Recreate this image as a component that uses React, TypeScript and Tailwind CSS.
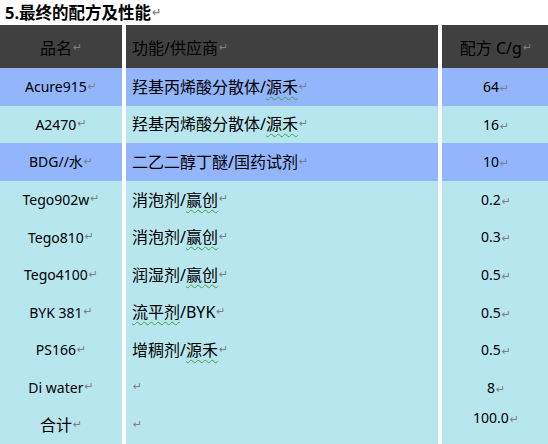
import React from "react";

const Ret = () => (
  <span className="text-[11px] text-[#7f7f7f] ml-[1px]" style={{ fontFamily: '"DejaVu Sans", sans-serif' }}>↵</span>
);

const Wavy = ({ children }: { children: React.ReactNode }) => (
  <span className="underline decoration-wavy decoration-[#3aa83a] decoration-1 underline-offset-[3px]">{children}</span>
);

type Row = { name: React.ReactNode; fn: React.ReactNode; val: string; blue?: boolean; cjk?: boolean };

const rows: Row[] = [
  { name: "Acure915", fn: <>羟基丙烯酸分散体/<Wavy>源禾</Wavy></>, val: "64", blue: true },
  { name: "A2470", fn: <>羟基丙烯酸分散体/<Wavy>源禾</Wavy></>, val: "16" },
  { name: "BDG//水", fn: <>二乙二醇丁醚/国药试剂</>, val: "10", blue: true },
  { name: "Tego902w", fn: <>消泡剂/<Wavy>赢创</Wavy></>, val: "0.2" },
  { name: "Tego810", fn: <>消泡剂/<Wavy>赢创</Wavy></>, val: "0.3" },
  { name: "Tego4100", fn: <>润湿剂/<Wavy>赢创</Wavy></>, val: "0.5" },
  { name: "BYK 381", fn: <><Wavy>流平剂</Wavy>/BYK</>, val: "0.5" },
  { name: "PS166", fn: <>增稠剂/<Wavy>源禾</Wavy></>, val: "0.5" },
  { name: "Di water", fn: null, val: "8" },
  { name: "合计", fn: null, val: "100.0", cjk: true },
];

export default function App() {
  const font = { fontFamily: '"Noto Sans", "Noto Sans CJK SC", sans-serif' };
  return (
    <div className="w-[548px] h-[444px] bg-white overflow-hidden text-black" style={font}>
      <div className="h-[25px] pl-[5px] pt-[1px] text-[16.5px] font-bold leading-[22px] flex items-center">
        <span>5.最终的配方及性能</span>
        <Ret />
      </div>
      <div className="grid grid-cols-[122px_312px_106px] gap-x-[4px]">
        <div className="h-[43px] bg-[#404040] flex items-center justify-center text-[16px] pt-[3px]">
          品名<Ret />
        </div>
        <div className="h-[43px] bg-[#404040] flex items-center pl-[6px] text-[16px] pt-[3px]">
          功能/供应商<Ret />
        </div>
        <div className="h-[43px] bg-[#404040] flex items-center justify-center text-[16px] pt-[3px] pl-[2px]">
          配方 C/g<Ret />
        </div>
        {rows.map((r, i) => {
          const bg = r.blue ? "bg-[#92b5fc]" : "bg-[#b8e6ee]";
          const last = i === rows.length - 1;
          return (
            <React.Fragment key={i}>
              <div className={`h-[37.6px] ${bg} flex items-center justify-center ${r.cjk ? "text-[16px]" : "text-[14px]"}`}>
                {r.name}<Ret />
              </div>
              <div className={`h-[37.6px] ${bg} flex items-center pl-[6px] text-[16px]`}>
                {r.fn}<Ret />
              </div>
              <div className={`h-[37.6px] ${bg} flex ${last ? "items-start" : "items-center"} justify-center text-[14px] pl-[2px]`}>
                <span className={last ? "mt-[1px]" : ""}>{r.val}<Ret /></span>
              </div>
            </React.Fragment>
          );
        })}
      </div>
    </div>
  );
}
